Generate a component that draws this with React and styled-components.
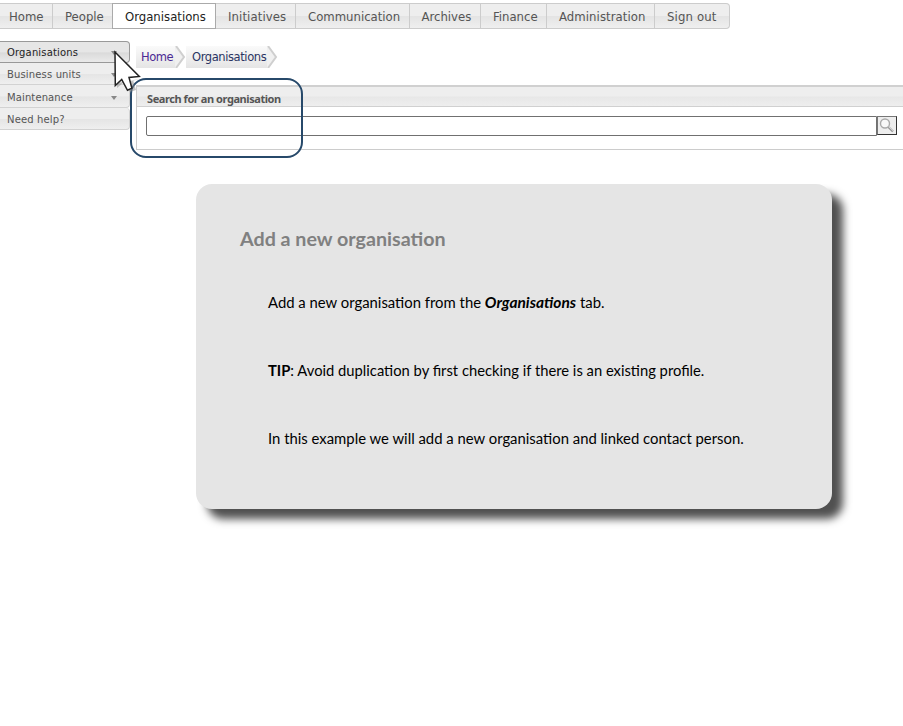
import React from "react";
import styled, { createGlobalStyle, css } from "styled-components";

const GlobalStyle = createGlobalStyle`
  body { margin: 0; background: #fff; overflow: hidden; }
  *, *::before, *::after { box-sizing: border-box; }
`;

const Page = styled.div`
  position: relative;
  width: 903px;
  height: 726px;
  padding-top: 3px;
  background: #fff;
  overflow: hidden;
`;

const NavBar = styled.nav`
  display: flex;
  width: 730px;
  height: 26px;
  border: 1px solid #ccc;
  border-left: 0;
  border-radius: 0 4px 4px 0;
  background: linear-gradient(#eee 0 50%, #e4e4e4 52%, #efefef 100%);
`;

const NavTab = styled.a`
  flex: none;
  width: ${(p) => p.$width}px;
  padding-left: ${(p) => p.$pad}px;
  border-right: 1px solid #ccc;
  font: 13px/25px "DejaVu Sans Condensed", "DejaVu Sans", sans-serif;
  font-stretch: condensed;
  letter-spacing: ${(p) => p.$track}px;
  white-space: nowrap;
  color: #555;
  &:last-child { border-right: 0; }
  ${(p) => p.$active && css`
    height: 26px;
    margin: -1px 0 -1px -1px;
    border: 1px solid #aaa;
    line-height: 25px;
    background: #fff;
    color: #222;
  `}
`;

const Body = styled.div`
  display: flex;
  height: 155px;
  padding-top: 12px;
`;

const SideMenu = styled.aside`
  flex: none;
  width: 130px;
  margin-right: 6px;
`;

const SideItem = styled.a`
  display: flex;
  align-items: center;
  justify-content: space-between;
  height: ${(p) => p.$height}px;
  padding: ${(p) => p.$drop}px 12px 0 7px;
  border: 1px solid ${(p) => (p.$active ? "#999" : "#d2d2d2")};
  border-left: 0;
  border-top-width: ${(p) => (p.$active ? 1 : 0)}px;
  border-radius: 0 4px 4px 0;
  background: linear-gradient(${(p) => (p.$active ? "#e6e6e6 0 50%, #dadada 54%, #eaeaea" : "#eee 0 50%, #e5e5e5 54%, #efefef")});
  font: 10px/18px "DejaVu Sans", sans-serif;
  letter-spacing: ${(p) => p.$track}px;
  color: ${(p) => (p.$active ? "#222" : "#555")};
`;

const Caret = styled.span`
  width: 0;
  border: 3.5px solid transparent;
  border-top: 4px solid #888;
  border-bottom: 0;
`;

const Main = styled.main`
  flex: 1;
  min-width: 0;
`;

const Breadcrumb = styled.nav`
  display: flex;
  height: 22px;
  margin-top: 5px;
  font: 11.5px/22px "DejaVu Sans", sans-serif;
`;

const Crumb = styled.a`
  display: flex;
  width: ${(p) => p.$width}px;
  padding-left: ${(p) => p.$pad}px;
  background: linear-gradient(#fafafa, #e5e5e5);
  color: ${(p) => p.$color};
  letter-spacing: ${(p) => p.$track}px;
  white-space: nowrap;
`;

const Chevron = styled.svg`
  flex: none;
  width: 11px;
  height: 22px;
`;

const SearchPanel = styled.section`
  height: 65px;
  margin-top: 17px;
  border: solid #ccc;
  border-width: 2px 0 1px 1px;
  border-top-color: #d0d0d0;
`;

const SearchTitle = styled.h2`
  height: 20px;
  margin: 0;
  padding-left: 10px;
  border-bottom: 1px solid #d0d0d0;
  background: linear-gradient(#eee 0 48%, #e7e7e7 52%, #eee);
  font: bold 11px/23px "Noto Sans", sans-serif;
  letter-spacing: ${(p) => p.$track}px;
  color: #555;
`;

const SearchRow = styled.div`
  display: flex;
  padding: 9px 6px 0 9px;
`;

const SearchInput = styled.input`
  flex: 1;
  min-width: 0;
  height: 20px;
  border: 1px solid #707070;
  border-radius: 2px 0 0 2px;
  background: #fff;
  outline: none;
`;

const SearchButton = styled.button`
  width: 20px;
  height: 19px;
  padding: 0;
  border: 1px solid;
  border-color: #777 #333 #333 #777;
  background: #eee;
  svg { display: block; }
`;

const Callout = styled.article`
  width: 636px;
  height: 325px;
  margin: 0 0 0 196px;
  padding: 41px 44px 0;
  border-radius: 16px;
  background: #e5e5e5;
  box-shadow: 11px 10px 9px 0 #505050;
  font-family: Lato, sans-serif;
`;

const CalloutTitle = styled.h1`
  margin: 0 0 37px;
  font-size: 19.7px;
  line-height: 28px;
  color: #808080;
`;

const Line = styled.p`
  margin: 0 0 44px 28px;
  font-size: ${(p) => p.$size}px;
  line-height: 24px;
  white-space: nowrap;
  color: #000;
`;

const TabName = styled.strong`
  font-size: 15.5px;
  font-style: italic;
  line-height: 1;
`;

const Highlight = styled.div`
  position: absolute;
  left: 130px;
  top: 78px;
  width: 173px;
  height: 80px;
  border: 2px solid #27496a;
  border-radius: 16px;
  pointer-events: none;
`;

const Pointer = styled.svg`
  position: absolute;
  left: 112px;
  top: 49px;
  width: 34px;
  height: 48px;
`;

const tabs = [
  { label: "Home", width: 53, pad: 9, track: 0 },
  { label: "People", width: 60, pad: 12, track: 0 },
  { label: "Organisations", width: 104, pad: 12, track: 0, active: true },
  { label: "Initiatives", width: 80, pad: 12, track: 0.1 },
  { label: "Communication", width: 114, pad: 12, track: 0 },
  { label: "Archives", width: 71, pad: 11.5, track: 0 },
  { label: "Finance", width: 66, pad: 12, track: 0 },
  { label: "Administration", width: 108, pad: 12, track: 0.07 },
  { label: "Sign out", width: 74, pad: 12, track: 0.15 },
];

const sideItems = [
  { label: "Organisations", height: 22, drop: 2, track: 0.15, caret: true, active: true },
  { label: "Business units", height: 22, drop: 3, track: 0.15, caret: true },
  { label: "Maintenance", height: 23, drop: 4, track: 0.12, caret: true },
  { label: "Need help?", height: 22, drop: 2, track: 0.15 },
];

function CrumbArrow() {
  return (
    <Chevron viewBox="0 0 11 22">
      <path d="M0 0 9 11 0 22Z" fill="#f0f0f0" />
      <path d="M1 0 9 11 1 22" fill="none" stroke="#cfcfcf" strokeWidth="2" />
    </Chevron>
  );
}

export default function App() {
  return (
    <Page>
      <GlobalStyle />
      <NavBar>
        {tabs.map((t) => (
          <NavTab key={t.label} $width={t.width} $pad={t.pad} $track={t.track} $active={t.active}>
            {t.label}
          </NavTab>
        ))}
      </NavBar>
      <Body>
        <SideMenu>
          {sideItems.map((s) => (
            <SideItem key={s.label} $height={s.height} $drop={s.drop} $track={s.track} $active={s.active}>
              {s.label}
              {s.caret && <Caret />}
            </SideItem>
          ))}
        </SideMenu>
        <Main>
          <Breadcrumb>
            <Crumb $width={39} $pad={5} $color="#4b2a94" $track={-0.5}>Home</Crumb>
            <CrumbArrow />
            <Crumb $width={81} $pad={6} $color="#2b3563" $track={-0.4}>Organisations</Crumb>
            <CrumbArrow />
          </Breadcrumb>
          <SearchPanel>
            <SearchTitle $track={-0.43}>Search for an organisation</SearchTitle>
            <SearchRow>
              <SearchInput aria-label="Search for an organisation" />
              <SearchButton aria-label="Search">
                <svg width="18" height="17" viewBox="0 0 18 17" fill="none">
                  <circle cx="7" cy="6.5" r="4.5" fill="#f8f8f8" stroke="#aaa" strokeWidth="1.4" />
                  <path d="M10.5 10 15 14.5" stroke="#999" strokeWidth="2.4" />
                  <path d="M10.8 9.5 15.4 14" stroke="#fff" strokeWidth=".8" />
                </svg>
              </SearchButton>
            </SearchRow>
          </SearchPanel>
        </Main>
      </Body>
      <Callout>
        <CalloutTitle>Add a new organisation</CalloutTitle>
        <Line $size={14.87}>Add a new organisation from the <TabName>Organisations</TabName> tab.</Line>
        <Line $size={14.75}><b>TIP</b>: Avoid duplication by first checking if there is an existing profile.</Line>
        <Line $size={14.87}>In this example we will add a new organisation and linked contact person.</Line>
      </Callout>
      <Highlight />
      <Pointer viewBox="0 0 34 48">
        <path d="M5 34V39L12 33 18 43 24 41 21 31 30 30Z" fill="#888" opacity=".5" />
        <path d="M3 3 3.3 36.5 9.7 30.5 15.5 41.3 19.9 39.2 17 28.5 27.3 27.5Z" fill="#fff" stroke="#222" strokeWidth="1.5" />
      </Pointer>
    </Page>
  );
}
